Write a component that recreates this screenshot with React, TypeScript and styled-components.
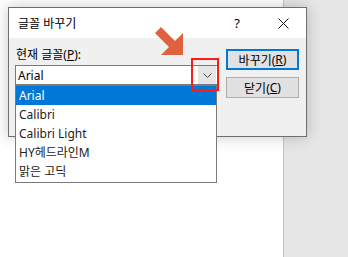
import React from 'react';
import styled, { createGlobalStyle } from 'styled-components';

const FONT = `"Noto Sans", "Noto Sans CJK KR", sans-serif`;
const ACCENT = '#0078d7';

const GlobalStyle = createGlobalStyle`
  html, body {
    margin: 0;
    padding: 0;
    width: 348px;
    height: 257px;
    overflow: hidden;
    font-family: ${FONT};
  }
`;

const Desktop = styled.div`
  position: relative;
  display: flex;
  width: 348px;
  height: 257px;
`;

const PagePane = styled.div`
  width: 283px;
  background: #ffffff;
  border-right: 1px solid #c6c6c6;
`;

const SidePane = styled.div`
  flex: 1;
  background: #e6e6e6;
`;

const Dialog = styled.div`
  position: absolute;
  left: 8px;
  top: 7px;
  width: 297px;
  height: 128px;
  display: flex;
  flex-direction: column;
  border: 1px solid #6f6f6f;
  background: #f0f0f0;
  box-shadow: 0 0 14px rgba(0, 0, 0, 0.22);
  font-size: 12px;
  color: #000;
`;

const TitleBar = styled.div`
  display: flex;
  align-items: center;
  height: 30px;
  background: #ffffff;
`;

const Title = styled.div`
  flex: 1;
  padding-left: 9px;
  font-size: 12px;
`;

const CaptionButton = styled.div`
  width: 46px;
  height: 30px;
  display: flex;
  align-items: center;
  justify-content: center;
  font-size: 13px;
`;

const Body = styled.div`
  display: flex;
  gap: 8px;
  padding: 8px 6px 0 6px;
`;

const FieldColumn = styled.div`
  display: flex;
  flex-direction: column;
  width: 203px;
`;

const Label = styled.div`
  height: 17px;
  line-height: 17px;
  padding-left: 1px;
  margin-bottom: 2px;
`;

const Combo = styled.div`
  display: flex;
  align-items: center;
  height: 18px;
  border: 1px solid #7a7a7a;
  background: #ffffff;
`;

const ComboText = styled.div`
  flex: 1;
  padding-left: 2px;
  font-size: 12px;
`;

const DropButton = styled.div`
  width: 18px;
  height: 18px;
  margin-right: 1px;
  display: flex;
  align-items: center;
  justify-content: center;
  background: #e5e5e5;
`;

const ButtonColumn = styled.div`
  display: flex;
  flex-direction: column;
  gap: 7px;
  padding-top: 3px;
`;

const Button = styled.div<{ $default?: boolean }>`
  width: 73px;
  height: 21px;
  box-sizing: border-box;
  display: flex;
  align-items: center;
  justify-content: center;
  background: #e1e1e1;
  border: ${p => (p.$default ? `2px solid ${ACCENT}` : '1px solid #adadad')};
  font-size: 12px;
`;

const List = styled.div`
  position: absolute;
  left: 15px;
  top: 85px;
  width: 200px;
  border: 1px solid #7a7a7a;
  background: #ffffff;
  padding-bottom: 1px;
  font-size: 12px;
`;

const ListItem = styled.div<{ $selected?: boolean }>`
  height: 19px;
  line-height: 19px;
  padding-left: 3px;
  background: ${p => (p.$selected ? ACCENT : 'transparent')};
  color: ${p => (p.$selected ? '#ffffff' : '#222')};
`;

const Highlight = styled.div`
  position: absolute;
  left: 191px;
  top: 58px;
  width: 24px;
  height: 29px;
  border: 2px solid #ff1a1a;
`;

const Pointer = styled.svg`
  position: absolute;
  left: 150px;
  top: 22px;
`;

const U = styled.span`
  text-decoration: underline;
`;

const fonts = ['Arial', 'Calibri', 'Calibri Light', 'HY헤드라인M', '맑은 고딕'];

export default function App() {
  return (
    <>
      <GlobalStyle />
      <Desktop>
        <PagePane />
        <SidePane />
        <Dialog>
          <TitleBar>
            <Title>글꼴 바꾸기</Title>
            <CaptionButton>?</CaptionButton>
            <CaptionButton>
              <svg width="11" height="11" viewBox="0 0 11 11">
                <path d="M0.5 0.5 L10.5 10.5 M10.5 0.5 L0.5 10.5" stroke="#111" strokeWidth="1" />
              </svg>
            </CaptionButton>
          </TitleBar>
          <Body>
            <FieldColumn>
              <Label>
                현재 글꼴(<U>P</U>):
              </Label>
              <Combo>
                <ComboText>Arial</ComboText>
                <DropButton>
                  <svg width="9" height="5" viewBox="0 0 9 5">
                    <path d="M0.5 0.5 L4.5 4.5 L8.5 0.5" fill="none" stroke="#444" strokeWidth="1" />
                  </svg>
                </DropButton>
              </Combo>
            </FieldColumn>
            <ButtonColumn>
              <Button $default>
                바꾸기(<U>R</U>)
              </Button>
              <Button>
                닫기(<U>C</U>)
              </Button>
            </ButtonColumn>
          </Body>
        </Dialog>
        <List>
          {fonts.map((f, i) => (
            <ListItem key={f} $selected={i === 0}>
              {f}
            </ListItem>
          ))}
        </List>
        <Highlight />
        <Pointer width="40" height="40" viewBox="0 0 40 40">
          <polygon
            points="5,11 11,5 25,19 33,11 33,33 11,33 19,25"
            fill="#e0613d"
          />
        </Pointer>
      </Desktop>
    </>
  );
}
